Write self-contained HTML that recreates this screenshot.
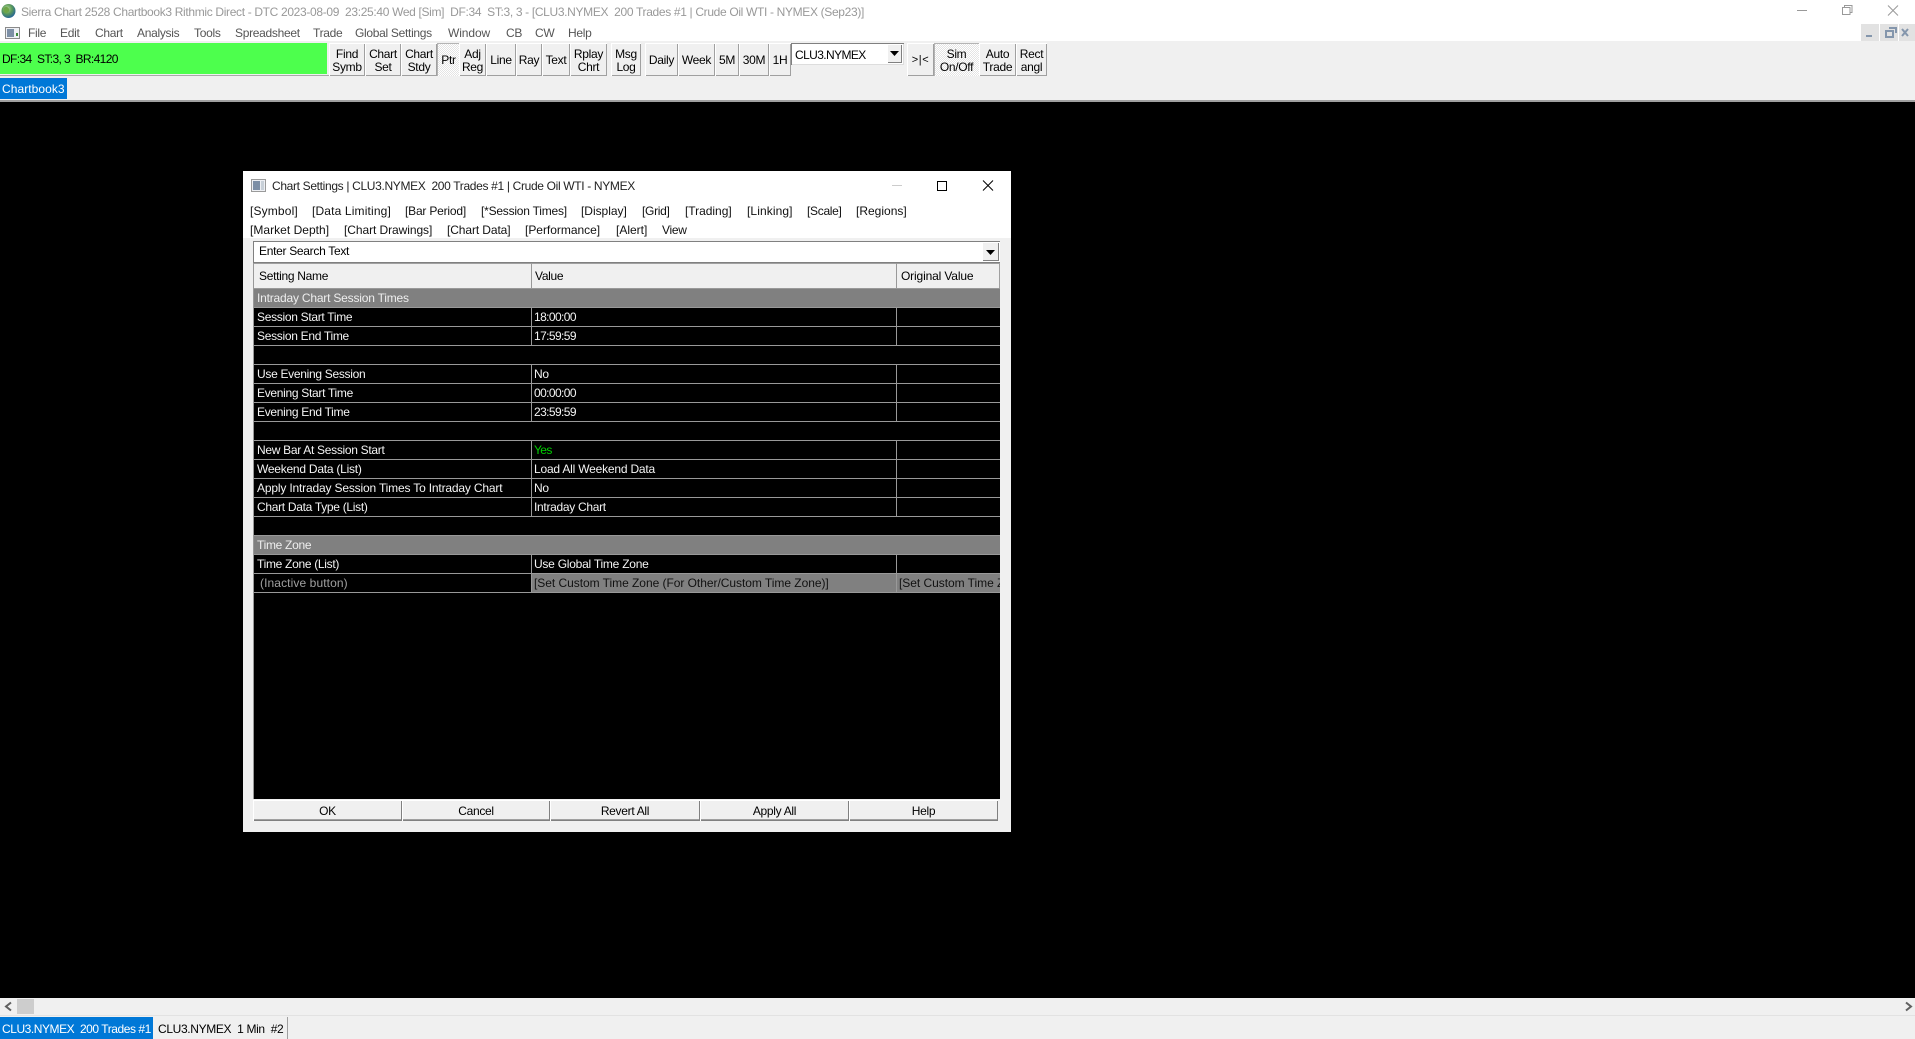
<!DOCTYPE html>
<html><head><meta charset="utf-8"><title>Sierra Chart</title>
<style>
html,body{margin:0;padding:0;width:1915px;height:1039px;overflow:hidden;background:#000}
body{position:relative;font-family:"Liberation Sans",sans-serif;font-size:12px;letter-spacing:-.3px;color:#000}
div,span.t{position:absolute}
.t{white-space:pre;line-height:16px;height:16px}
.m{color:#555;top:25px}
.b{background:#f0f0f0;top:43px;height:33px;box-shadow:inset 1px 1px 0 #fff,inset -1px -1px 0 #a0a0a0;text-align:center;line-height:13px;white-space:pre}
.b.s{line-height:34px}
.b.d{line-height:13px;padding-top:5px;height:28px}
.p{background:#f0f0f0 repeating-conic-gradient(#fff 0 25%,#e4e4e4 0 50%) 0 0/2px 2px;box-shadow:inset 1px 1px 0 #b4b4b4}
.h{top:203px}.v{top:222px}
.h,.v{color:#111}
.l{left:253px;width:747px;height:1px;background:#999}
.c{width:1px;background:#999;height:18px}
.w{color:#f4f4f4}
.k{left:257px}.x{left:534px}
.n{letter-spacing:-.6px}
.o{background:#f0f0f0;top:800px;height:21px;box-shadow:inset 1px 1px 0 #fff,inset -1px -1px 0 #808080,inset 0 -2px 0 #a0a0a0;text-align:center;line-height:23px}
</style></head><body>

<!-- title bar -->
<div style="left:0;top:0;width:1915px;height:41px;background:#fff"></div>
<svg style="position:absolute;left:1px;top:3px" width="15" height="16" viewBox="0 0 15 16"><defs><radialGradient id="g" cx=".4" cy=".35" r=".7"><stop offset="0" stop-color="#b8dc9a"/><stop offset=".5" stop-color="#5b9a5a"/><stop offset="1" stop-color="#1f5f9c"/></radialGradient></defs><circle cx="7.5" cy="8" r="7" fill="url(#g)"/><path d="M3 5c2-2 4-1 5 1s-1 4-3 4-3-3-2-5z" fill="#6fa548"/></svg>
<span class="t" style="left:21px;top:4px;color:#999;letter-spacing:-.335px">Sierra Chart 2528 Chartbook3 Rithmic Direct - DTC 2023-08-09  23:25:40 Wed [Sim]  DF:34  ST:3, 3 - [CLU3.NYMEX  200 Trades #1 | Crude Oil WTI - NYMEX (Sep23)]</span>

<svg style="position:absolute;left:1797px;top:5px" width="102" height="11" viewBox="0 0 102 11" fill="none" stroke="#999"><path d="M0 5.500h10"/><path d="M45.500 2.500h7.500v7h-7.500zM47.500 2.500v-2h7.500v7h-2" /><path d="M91 .5l10 10M101 .5l-10 10"/></svg>

<!-- menu -->
<svg style="position:absolute;left:5px;top:27px" width="15" height="12"><rect x=".5" y=".5" width="14" height="11" fill="#eef0f4" stroke="#8a8a8a"/><rect x="2" y="2" width="7" height="8" fill="#7d8fa6"/><rect x="11" y="6" width="2" height="3" fill="#3c8a3c"/></svg>
<span class="t m" style="left:28px">File</span>
<span class="t m" style="left:60px">Edit</span>
<span class="t m" style="left:95px">Chart</span>
<span class="t m" style="left:137px">Analysis</span>
<span class="t m" style="left:194px">Tools</span>
<span class="t m" style="left:235px">Spreadsheet</span>
<span class="t m" style="left:313px">Trade</span>
<span class="t m" style="left:355px">Global Settings</span>
<span class="t m" style="left:448px;letter-spacing:-.1px">Window</span>
<span class="t m" style="left:506px">CB</span>
<span class="t m" style="left:535px">CW</span>
<span class="t m" style="left:568px">Help</span>

<div style="left:1861px;top:24px;width:18px;height:17px;background:#e2e2e2"></div>
<div style="left:1880px;top:24px;width:18px;height:17px;background:#e2e2e2"></div>
<div style="left:1899px;top:24px;width:16px;height:17px;background:#e2e2e2"></div>
<svg style="position:absolute;left:1861px;top:24px" width="54" height="17" fill="none" stroke="#8496ac" stroke-width="2"><path d="M5 12h6"/><path d="M25 7h7v6h-7zM28 4h7v5"/><path d="M41 5l6 7M47 5l-6 7"/></svg>

<!-- toolbar -->
<div style="left:0;top:41px;width:1915px;height:59px;background:#f0f0f0"></div>
<div style="left:0;top:100px;width:1915px;height:2px;background:#a0a0a0"></div>
<div style="left:0;top:43px;width:327px;height:31px;background:#4dff4d"></div>
<div style="left:0;top:75px;width:329px;height:1px;background:#a8a8a8"></div>
<span class="t" style="left:2px;top:51px;letter-spacing:-.62px">DF:34  ST:3, 3  BR:4120</span>

<div class="b d" style="left:329px;width:36px">Find
Symb</div>
<div class="b d" style="left:365px;width:36px">Chart
Set</div>
<div class="b d" style="left:401px;width:36px">Chart
Stdy</div>
<div class="b s p" style="left:437px;width:23px">Ptr</div>
<div class="b d" style="left:459px;width:27px">Adj
Reg</div>
<div class="b s" style="left:486px;width:30px">Line</div>
<div class="b s" style="left:516px;width:26px">Ray</div>
<div class="b s" style="left:542px;width:28px">Text</div>
<div class="b d" style="left:570px;width:37px">Rplay
Chrt</div>
<div class="b d" style="left:611px;width:30px">Msg
Log</div>
<div class="b s" style="left:645px;width:33px">Daily</div>
<div class="b s" style="left:678px;width:37px">Week</div>
<div class="b s" style="left:715px;width:24px">5M</div>
<div class="b s" style="left:739px;width:30px">30M</div>
<div class="b s" style="left:769px;width:22px">1H</div>
<div style="left:791px;top:43px;width:113px;height:22px;background:#fff;box-shadow:inset 1px 1px 0 #808080,inset -1px -1px 0 #ddd"></div>
<span class="t" style="left:795px;top:47px;letter-spacing:-.6px">CLU3.NYMEX</span>
<div style="left:887px;top:44px;width:15px;height:19px;background:#f0f0f0;box-shadow:inset 1px 1px 0 #fff,inset -1px -1px 0 #808080"></div>
<svg style="position:absolute;left:890px;top:51px" width="9" height="5"><path d="M0 0h9L4.500 5z"/></svg>
<div class="b s" style="left:907px;width:27px;font-size:11px;letter-spacing:.6px">&gt;|&lt;</div>
<div class="b d p" style="left:934px;width:45px">Sim
On/Off</div>
<div class="b d" style="left:979px;width:37px">Auto
Trade</div>
<div class="b d" style="left:1016px;width:31px">Rect
angl</div>

<div style="left:0;top:78px;width:67px;height:21px;background:#0078d7"></div>
<span class="t" style="left:2px;top:81px;color:#fff;letter-spacing:.06px">Chartbook3</span>

<!-- dialog -->
<div style="left:243px;top:171px;width:768px;height:661px;background:#f0f0f0"></div>
<div style="left:243px;top:171px;width:768px;height:67px;background:#fff"></div>
<svg style="position:absolute;left:251px;top:179px" width="15" height="13"><rect x=".5" y=".5" width="14" height="12" fill="#eef0f4" stroke="#9a9a9a"/><rect x="2" y="2" width="7" height="9" fill="#7d8fa6"/><rect x="10" y="2" width="3" height="9" fill="#c8d0d8"/></svg>
<span class="t" style="left:272px;top:178px;color:#222;letter-spacing:-.335px">Chart Settings | CLU3.NYMEX  200 Trades #1 | Crude Oil WTI - NYMEX</span>
<svg style="position:absolute;left:892px;top:180px" width="102" height="11" fill="none"><path d="M0 5.500h10" stroke="#ccc"/><rect x="45.500" y="1.500" width="9" height="9" stroke="#000"/><path d="M91 .5l10 10M101 .5l-10 10" stroke="#000"/></svg>

<span class="t h" style="left:250px;letter-spacing:.15px">[Symbol]</span>
<span class="t h" style="left:312px;letter-spacing:.15px">[Data Limiting]</span>
<span class="t h" style="left:405px;letter-spacing:-.2px">[Bar Period]</span>
<span class="t h" style="left:481px;letter-spacing:-.22px">[*Session Times]</span>
<span class="t h" style="left:581px;letter-spacing:-.03px">[Display]</span>
<span class="t h" style="left:642px">[Grid]</span>
<span class="t h" style="left:685px;letter-spacing:-.03px">[Trading]</span>
<span class="t h" style="left:747px;letter-spacing:.1px">[Linking]</span>
<span class="t h" style="left:807px">[Scale]</span>
<span class="t h" style="left:856px;letter-spacing:0">[Regions]</span>
<span class="t v" style="left:250px;letter-spacing:.03px">[Market Depth]</span>
<span class="t v" style="left:344px;letter-spacing:-.07px">[Chart Drawings]</span>
<span class="t v" style="left:447px;letter-spacing:-.1px">[Chart Data]</span>
<span class="t v" style="left:525px;letter-spacing:-.02px">[Performance]</span>
<span class="t v" style="left:616px;letter-spacing:0">[Alert]</span>
<span class="t v" style="left:662px">View</span>

<!-- search -->
<div style="left:253px;top:241px;width:747px;height:22px;background:#fff;box-shadow:inset 1px 1px 0 #808080,inset 0 -1px 0 #808080"></div>
<span class="t" style="left:259px;top:243px">Enter Search Text</span>
<div style="left:982px;top:242px;width:17px;height:19px;background:#f0f0f0;box-shadow:inset 1px 1px 0 #fff,inset -1px -1px 0 #808080"></div>
<svg style="position:absolute;left:986px;top:250px" width="9" height="5"><path d="M0 0h9L4.500 5z"/></svg>

<!-- grid -->
<div style="left:253px;top:263px;width:747px;height:536px;background:#000"></div>
<div style="left:253px;top:263px;width:747px;height:25px;background:#f0f0f0;box-shadow:inset 1px 0 0 #a0a0a0,inset -1px 0 0 #a0a0a0,inset 0 1px 0 #a0a0a0"></div>
<div style="left:253px;top:288px;width:747px;height:1px;background:#999"></div>
<div class="c" style="left:531px;top:263px;height:25px"></div>
<div class="c" style="left:896px;top:263px;height:25px"></div>
<span class="t" style="left:259px;top:268px">Setting Name</span>
<span class="t" style="left:535px;top:268px">Value</span>
<span class="t" style="left:901px;top:268px;letter-spacing:-.15px">Original Value</span>

<div style="left:253px;top:289px;width:747px;height:18px;background:#808080"></div>
<div style="left:253px;top:535px;width:747px;height:19px;background:#808080"></div>
<div style="left:532px;top:574px;width:468px;height:18px;background:#808080"></div>

<div class="l" style="top:307px"></div><div class="l" style="top:326px"></div><div class="l" style="top:345px"></div><div class="l" style="top:364px"></div><div class="l" style="top:383px"></div><div class="l" style="top:402px"></div><div class="l" style="top:421px"></div><div class="l" style="top:440px"></div><div class="l" style="top:459px"></div><div class="l" style="top:478px"></div><div class="l" style="top:497px"></div><div class="l" style="top:516px"></div><div class="l" style="top:535px"></div><div class="l" style="top:554px"></div><div class="l" style="top:573px"></div><div class="l" style="top:592px"></div>
<div style="left:253px;top:263px;width:1px;height:536px;background:#999"></div>

<div class="c" style="left:531px;top:308px;height:37px"></div><div class="c" style="left:896px;top:308px;height:37px"></div>
<div class="c" style="left:531px;top:365px;height:56px"></div><div class="c" style="left:896px;top:365px;height:56px"></div>
<div class="c" style="left:531px;top:441px;height:75px"></div><div class="c" style="left:896px;top:441px;height:75px"></div>
<div class="c" style="left:531px;top:555px;height:37px"></div><div class="c" style="left:896px;top:555px;height:37px"></div>

<span class="t k" style="top:290px;color:#eee;letter-spacing:-.2px">Intraday Chart Session Times</span>
<span class="t k w" style="top:309px">Session Start Time</span><span class="t x w n" style="top:309px">18:00:00</span>
<span class="t k w" style="top:328px">Session End Time</span><span class="t x w n" style="top:328px">17:59:59</span>
<span class="t k w" style="top:366px">Use Evening Session</span><span class="t x w" style="top:366px">No</span>
<span class="t k w" style="top:385px">Evening Start Time</span><span class="t x w n" style="top:385px">00:00:00</span>
<span class="t k w" style="top:404px">Evening End Time</span><span class="t x w n" style="top:404px">23:59:59</span>
<span class="t k w" style="top:442px">New Bar At Session Start</span><span class="t x" style="top:442px;color:#00d000;letter-spacing:-.6px">Yes</span>
<span class="t k w" style="top:461px;letter-spacing:-.24px">Weekend Data (List)</span><span class="t x w" style="top:461px;letter-spacing:-.2px">Load All Weekend Data</span>
<span class="t k w" style="top:480px;letter-spacing:-.17px">Apply Intraday Session Times To Intraday Chart</span><span class="t x w" style="top:480px">No</span>
<span class="t k w" style="top:499px">Chart Data Type (List)</span><span class="t x w" style="top:499px">Intraday Chart</span>
<span class="t k" style="top:537px;color:#eee">Time Zone</span>
<span class="t k w" style="top:556px">Time Zone (List)</span><span class="t x w" style="top:556px;letter-spacing:-.24px">Use Global Time Zone</span>
<span class="t" style="left:260px;top:575px;color:#a0a0a0;letter-spacing:.1px">(Inactive button)</span>
<span class="t x" style="top:575px;color:#111;letter-spacing:-.04px">[Set Custom Time Zone (For Other/Custom Time Zone)]</span>
<div style="left:897px;top:574px;width:103px;height:18px;overflow:hidden"><span class="t" style="left:2px;top:1px;color:#111;letter-spacing:-.04px">[Set Custom Time Zone (For Other/Custom Time Zone)]</span></div>

<!-- dialog buttons -->
<div class="o" style="left:253px;width:149px">OK</div>
<div class="o" style="left:402px;width:148px">Cancel</div>
<div class="o" style="left:550px;width:150px">Revert All</div>
<div class="o" style="left:700px;width:149px">Apply All</div>
<div class="o" style="left:849px;width:149px">Help</div>

<!-- bottom -->
<div style="left:0;top:998px;width:1915px;height:41px;background:#f0f0f0"></div>
<div style="left:0;top:1015px;width:1915px;height:1px;background:#e2e2e2"></div>
<div style="left:17px;top:999px;width:17px;height:15px;background:#cdcdcd"></div>
<svg style="position:absolute;left:0;top:998px" width="1915" height="17" fill="none" stroke="#606060" stroke-width="2"><path d="M11 4.500l-5 4 5 4"/><path d="M1906 4.500l5 4-5 4"/></svg>
<div style="left:0;top:1017px;width:153px;height:22px;background:#0078d7"></div>
<span class="t" style="left:2px;top:1021px;color:#fff;letter-spacing:-.45px">CLU3.NYMEX  200 Trades #1</span>
<span class="t" style="left:158px;top:1021px;letter-spacing:-.35px">CLU3.NYMEX  1 Min  #2</span>
<div style="left:287px;top:1017px;width:1px;height:22px;background:#a0a0a0"></div>

</body></html>
